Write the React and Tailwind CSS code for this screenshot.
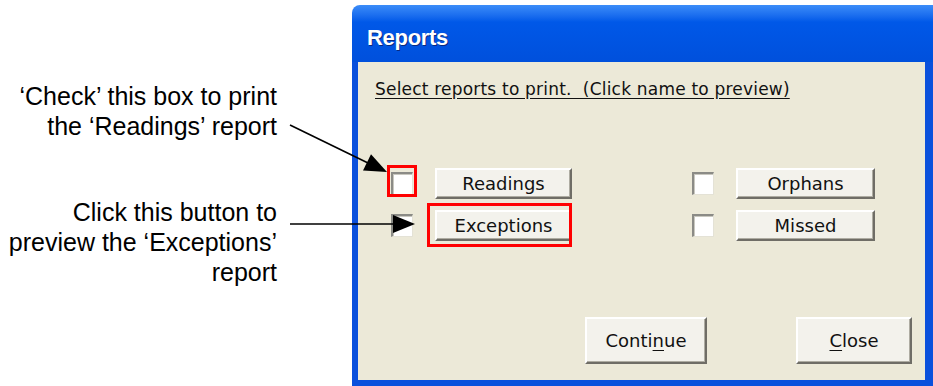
import React from "react";

// XP style checkbox (empty)
const Box = () => (
  <div className="w-[22px] h-[23px] shrink-0 bg-white border-t-2 border-l-2 border-t-[#8b8b86] border-l-[#8b8b86] border-b border-r border-b-[#e4e2d6] border-r-[#e4e2d6] shadow-[inset_1px_1px_0_#c9c8c0]" />
);

const Btn = ({ children, className = "" }) => (
  <div
    className={`flex items-center justify-center shrink-0 bg-[#f3f2ec] border-t-2 border-l-2 border-white border-b-2 border-r-2 border-b-[#6f6d66] border-r-[#6f6d66] shadow-[inset_-1px_-1px_0_#aeaca2] text-[18px] text-[#111] ${className}`}
  >
    {children}
  </div>
);

export default function App() {
  return (
    <div className="relative w-[933px] h-[386px] bg-white overflow-hidden flex font-['Liberation_Sans',Arial,sans-serif]">
      {/* annotations */}
      <div className="w-[352px] shrink-0 flex flex-col items-end pr-[75px] text-[25px] leading-[30px] text-black">
        <p className="mt-[81px] text-right">
          ‘Check’ this box to print
          <br />
          the ‘Readings’ report
        </p>
        <p className="mt-[56px] text-right">
          Click this button to
          <br />
          preview the ‘Exceptions’
          <br />
          report
        </p>
      </div>

      {/* dialog window */}
      <div className="mt-[5px] flex-1 flex flex-col">
        <div className="h-[57px] shrink-0 rounded-tl-[8px] bg-gradient-to-b from-[#3b8cf8] via-[#0058e8] via-30% to-[#0050dc] flex items-center pl-[15px] pt-[7px]">
          <span className="text-white font-bold text-[22px] tracking-[-0.3px] [text-shadow:1px_1px_0_#0b2a80]">
            Reports
          </span>
        </div>
        <div className="flex-1 flex flex-col bg-[#ece9d8] border-l-[6px] border-r-[8px] border-b-[6px] border-[#0a50dc] font-['DejaVu_Sans',Tahoma,sans-serif] text-[#111]">
          <p className="mt-[17px] ml-[17px] text-[17px] leading-[20px] tracking-[0.2px] underline underline-offset-[3px] whitespace-pre">
            Select reports to print.  (Click name to preview)
          </p>

          <div className="mt-[69px] flex flex-col gap-[11px] pl-[33px]">
            <div className="flex items-center">
              <Box />
              <Btn className="ml-[22px] w-[137px] h-[31px]">Readings</Btn>
              <div className="ml-[120px]">
                <Box />
              </div>
              <Btn className="ml-[22px] w-[139px] h-[31px]">Orphans</Btn>
            </div>
            <div className="flex items-center">
              <Box />
              <Btn className="ml-[22px] w-[137px] h-[31px]">Exceptions</Btn>
              <div className="ml-[120px]">
                <Box />
              </div>
              <Btn className="ml-[22px] w-[139px] h-[31px]">Missed</Btn>
            </div>
          </div>

          <div className="mt-auto mb-[16px] flex pl-[227px]">
            <Btn className="w-[122px] h-[47px]">
              <span>
                Conti<span className="underline underline-offset-[3px]">n</span>ue
              </span>
            </Btn>
            <Btn className="ml-[89px] w-[116px] h-[47px]">
              <span>
                <span className="underline underline-offset-[3px]">C</span>lose
              </span>
            </Btn>
          </div>
        </div>
      </div>

      {/* red highlight boxes */}
      <div className="absolute left-[387px] top-[165px] w-[30px] h-[32px] border-[3px] border-[#ff0000]" />
      <div className="absolute left-[427px] top-[203px] w-[145px] h-[44px] border-[3px] border-[#ff0000]" />

      {/* callout arrows */}
      <svg className="absolute inset-0 pointer-events-none" width="933" height="386">
        <line x1="290" y1="125" x2="368" y2="163" stroke="#000" strokeWidth="1.6" />
        <polygon points="387,172 363,170.5 371,154.3" fill="#000" />
        <line x1="290" y1="224" x2="394" y2="224" stroke="#000" strokeWidth="1.6" />
        <polygon points="415,224 393,215 393,233" fill="#000" />
      </svg>
    </div>
  );
}
